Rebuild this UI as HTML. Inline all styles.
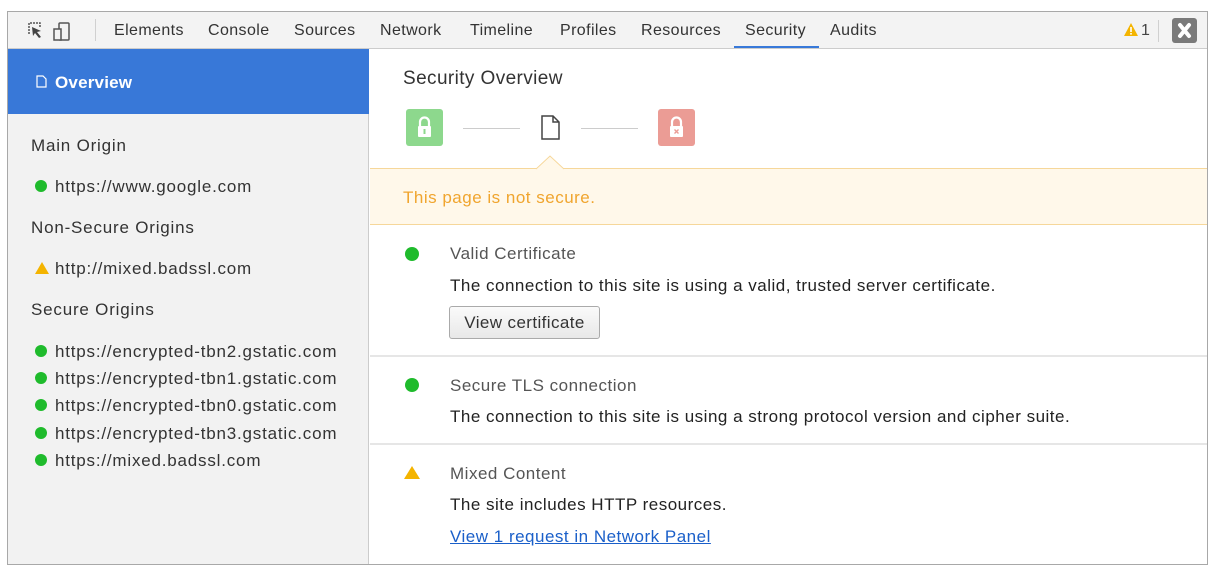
<!DOCTYPE html>
<html><head><meta charset="utf-8"><style>
*{margin:0;padding:0;box-sizing:border-box}
body{width:1216px;height:571px;background:#fff;font-family:"Liberation Sans",sans-serif;position:relative;overflow:hidden;color:#303030}
.a{position:absolute;white-space:nowrap}
#frame{position:absolute;left:7px;top:11px;width:1201px;height:554px;border:1px solid #a8a8a8}
#tb{position:absolute;left:8px;top:12px;width:1199px;height:37px;background:#f3f3f3;border-bottom:1px solid #ccc}
.tab{position:absolute;top:22px;font-size:16px;color:#333;letter-spacing:.4px}
#side{position:absolute;left:8px;top:49px;width:361px;height:515px;background:#f2f2f2;border-right:1px solid #ccc}
.s{position:absolute;font-size:17px;color:#333;letter-spacing:.8px;white-space:nowrap}
.dot{display:inline-block;width:12px;height:12px;border-radius:50%;background:#1fbb2c;margin-right:8px;vertical-align:0}
.m{position:absolute;font-size:17px;white-space:nowrap;letter-spacing:.5px}
.hr{position:absolute;left:370px;width:837px;height:1px;background:#e6e6e6}
</style></head><body>
<div id="frame"></div>
<div id="tb"></div>
<svg class="a" style="left:21px;top:20px" width="60" height="24" viewBox="0 0 60 24">
<path d="M8 14V3h11v4" fill="none" stroke="#555" stroke-width="1.5" stroke-dasharray="2 1"/>
<path d="M11 7l9 4-4 1 4 5-2 1-4-5-2 3z" fill="#444"/>
<rect x="38" y="3" width="10" height="17" rx="1" fill="none" stroke="#555" stroke-width="1.5"/>
<rect x="33" y="9" width="7" height="11" fill="#f3f3f3" stroke="#555" stroke-width="1.5"/>
</svg>
<div class="a" style="left:95px;top:19px;width:1px;height:22px;background:#d0d0d0"></div>
<div class="tab" style="left:114px">Elements</div>
<div class="tab" style="left:208px">Console</div>
<div class="tab" style="left:294px">Sources</div>
<div class="tab" style="left:380px">Network</div>
<div class="tab" style="left:470px">Timeline</div>
<div class="tab" style="left:560px">Profiles</div>
<div class="tab" style="left:641px">Resources</div>
<div class="tab" style="left:745px">Security</div>
<div class="a" style="left:734px;top:46px;width:85px;height:2px;background:#3879d9"></div>
<div class="tab" style="left:830px">Audits</div>
<svg class="a" style="left:1123px;top:22px" width="16" height="15"><path d="M8 1L15 14H1z" fill="#f4b400"/><rect x="7.2" y="5" width="1.6" height="5" fill="#fff"/><rect x="7.2" y="11" width="1.6" height="1.6" fill="#fff"/></svg>
<div class="tab" style="left:1141px;color:#444">1</div>
<div class="a" style="left:1158px;top:20px;width:1px;height:22px;background:#d0d0d0"></div>
<div class="a" style="left:1172px;top:18px;width:25px;height:25px;background:#7a7a7a;border-radius:3px"></div>
<svg class="a" style="left:1172px;top:18px" width="25" height="25"><path d="M8 7l9 11M17 7l-9 11" stroke="#fff" stroke-width="4" stroke-linecap="round"/></svg>

<div id="side"></div>
<div class="a" style="left:8px;top:49px;width:361px;height:65px;background:#3878d8"></div>
<svg class="a" style="left:36px;top:75px" width="11" height="13"><path d="M1 1h6l3 3v8H1z" fill="none" stroke="#fff" stroke-width="1.2"/></svg>
<div class="a" style="left:55px;top:73px;font-size:17px;color:#fff;font-weight:bold;letter-spacing:.2px">Overview</div>
<div class="s" style="left:31px;top:136px">Main Origin</div>
<div class="s" style="left:35px;top:177px"><span class="dot"></span>https://www.google.com</div>
<div class="s" style="left:31px;top:218px">Non-Secure Origins</div>
<div class="s" style="left:35px;top:259px"><svg width="14" height="12" style="margin-right:6px;vertical-align:0"><path d="M7 0L14 12H0z" fill="#f4b400"/></svg>http://mixed.badssl.com</div>
<div class="s" style="left:31px;top:300px">Secure Origins</div>
<div class="s" style="left:35px;top:342px"><span class="dot"></span>https://encrypted-tbn2.gstatic.com</div>
<div class="s" style="left:35px;top:369px"><span class="dot"></span>https://encrypted-tbn1.gstatic.com</div>
<div class="s" style="left:35px;top:396px"><span class="dot"></span>https://encrypted-tbn0.gstatic.com</div>
<div class="s" style="left:35px;top:424px"><span class="dot"></span>https://encrypted-tbn3.gstatic.com</div>
<div class="s" style="left:35px;top:451px"><span class="dot"></span>https://mixed.badssl.com</div>

<div class="m" style="left:403px;top:68px;font-size:19px;color:#333;letter-spacing:.4px">Security Overview</div>
<div class="a" style="left:406px;top:109px;width:37px;height:37px;background:#8dd88d;border-radius:3px"></div>
<svg class="a" style="left:406px;top:109px" width="37" height="37"><path d="M14 17v-4a4.5 4.5 0 0 1 9 0v4" fill="none" stroke="#fff" stroke-width="2.2"/><rect x="12" y="17" width="13" height="11" rx="1" fill="#fff"/><rect x="17.5" y="20" width="2" height="5" fill="#8dd88d"/></svg>
<div class="a" style="left:463px;top:128px;width:57px;height:1px;background:#ccc"></div>
<svg class="a" style="left:540px;top:115px" width="22" height="26"><path d="M2 1h11l6 6v17H2z M13 1v6h6" fill="none" stroke="#444" stroke-width="1.5"/></svg>
<div class="a" style="left:581px;top:128px;width:57px;height:1px;background:#ccc"></div>
<div class="a" style="left:658px;top:109px;width:37px;height:37px;background:#eb9c95;border-radius:3px"></div>
<svg class="a" style="left:658px;top:109px" width="37" height="37"><path d="M14 17v-4a4.5 4.5 0 0 1 9 0v4" fill="none" stroke="#fff" stroke-width="2.2"/><rect x="12" y="17" width="13" height="11" rx="1" fill="#fff"/><path d="M16.5 20.5l4 4M20.5 20.5l-4 4" stroke="#eb9c95" stroke-width="1.4"/></svg>
<div class="a" style="left:370px;top:168px;width:837px;height:57px;background:#fff8ea;border-top:1px solid #f6d79a;border-bottom:1px solid #f6d79a"></div>
<svg class="a" style="left:536px;top:155px" width="28" height="15"><path d="M0 14L14 1L28 14" fill="#fff8ea" stroke="#f6d79a" stroke-width="1"/></svg>
<div class="m" style="left:403px;top:188px;color:#f0a52e">This page is not secure.</div>

<span class="a" style="left:405px;top:247px;width:14px;height:14px;border-radius:50%;background:#1fbb2c"></span>
<div class="m" style="left:450px;top:244px;color:#555">Valid Certificate</div>
<div class="m" style="left:450px;top:276px;color:#222">The connection to this site is using a valid, trusted server certificate.</div>
<div class="a" style="left:449px;top:306px;width:151px;height:33px;border:1px solid #aaa;border-radius:3px;background:linear-gradient(#fafafa,#e8e8e8);font-size:17px;color:#333;text-align:center;line-height:31px;letter-spacing:.4px">View certificate</div>
<div class="hr" style="top:355px;height:2px"></div>
<span class="a" style="left:405px;top:378px;width:14px;height:14px;border-radius:50%;background:#1fbb2c"></span>
<div class="m" style="left:450px;top:376px;color:#555">Secure TLS connection</div>
<div class="m" style="left:450px;top:407px;color:#222">The connection to this site is using a strong protocol version and cipher suite.</div>
<div class="hr" style="top:443px;height:2px"></div>
<svg class="a" style="left:404px;top:466px" width="16" height="14"><path d="M8 0L16 13H0z" fill="#f4b400"/></svg>
<div class="m" style="left:450px;top:464px;color:#555">Mixed Content</div>
<div class="m" style="left:450px;top:495px;color:#222">The site includes HTTP resources.</div>
<div class="m" style="left:450px;top:527px;color:#1a5fc9;text-decoration:underline">View 1 request in Network Panel</div>
</body></html>
